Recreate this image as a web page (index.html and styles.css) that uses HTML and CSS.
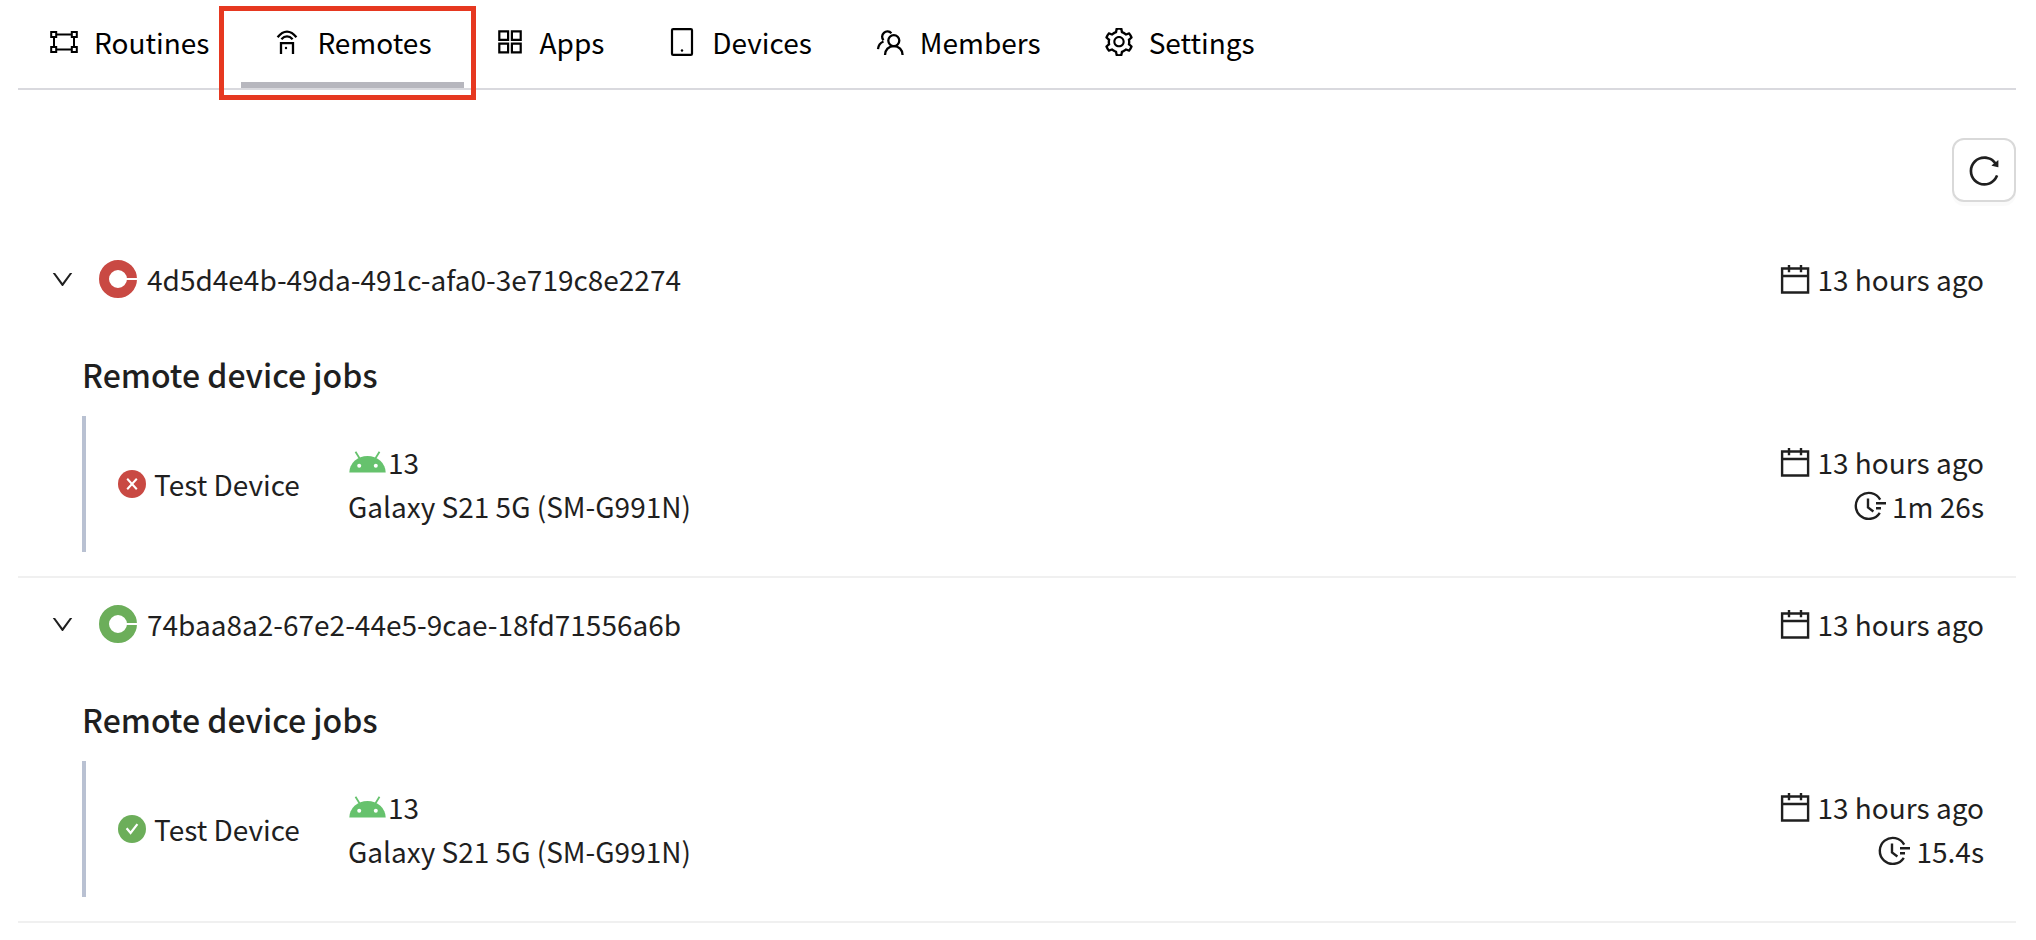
FILE: index.html
```html
<!DOCTYPE html>
<html lang="en">
<head>
<meta charset="utf-8">
<meta name="viewport" content="width=device-width, initial-scale=1">
<title>Remotes</title>
<link rel="stylesheet" href="styles.css">
</head>
<body>
<svg class="sprite" aria-hidden="true">
  <symbol id="i-routines" viewBox="0 0 28 28"><g fill="none" stroke="currentColor" stroke-width="2"><path d="M7 6.500h14M7 21.500h14M4 9.500v9M24 9.500v9"/><path d="M1.200 4h5v5h-5zM21.800 4h5v5h-5zM1.200 19h5v5h-5zM21.800 19h5v5h-5z" stroke-width="2"/></g></symbol>
  <symbol id="i-remotes" viewBox="0 0 28 28"><g fill="none" stroke="currentColor" stroke-width="2.300"><path d="M4.600 9.200Q9 3.600 14 3.600T23.400 9.200M8.400 11.200Q11 8.400 14 8.400T19.600 11.200M8 26V15.200h12V26"/></g><circle cx="13" cy="20" r="1.200" fill="currentColor"/></symbol>
  <symbol id="i-apps" viewBox="0 0 28 28"><path d="M3.300 3.300h8.800v8.600H3.300zM15.900 3.300h8.800v8.600h-8.800zM3.300 15.700h8.800v8.600H3.300zM15.900 15.700h8.800v8.600h-8.800z" fill="none" stroke="currentColor" stroke-width="2.200"/></symbol>
  <symbol id="i-devices" viewBox="0 0 28 28"><rect x="4" y="1.100" width="20" height="25.800" rx="1.200" fill="none" stroke="currentColor" stroke-width="2.200"/><circle cx="14" cy="22.500" r="1.200" fill="currentColor"/></symbol>
  <symbol id="i-members" viewBox="0 0 28 28"><g fill="none" stroke="currentColor" stroke-width="2.300"><circle cx="17.800" cy="12.600" r="5.500"/><path d="M9 27c0-5 3.700-8.900 8.800-8.900s8.800 3.900 8.800 8.900M15.400 5.200A5.300 5.300 0 1 0 7.500 12.300M7.500 13.500C4.500 14.700 2.300 17.500 2 21.200"/></g></symbol>
  <symbol id="i-settings" viewBox="78 78 868 868"><path fill="currentColor" d="M924.800 625.700l-65.500-56c3.100-19 4.700-38.400 4.700-57.800s-1.600-38.800-4.700-57.800l65.500-56a32.030 32.030 0 009.300-35.200l-.9-2.600a443.740 443.740 0 00-79.700-137.900l-1.800-2.100a32.120 32.120 0 00-35.100-9.500l-81.300 28.900c-30-24.600-63.500-44-99.700-57.600l-15.700-85a32.050 32.050 0 00-25.800-25.700l-2.700-.5c-52.100-9.400-106.900-9.400-159 0l-2.700.5a32.050 32.050 0 00-25.800 25.700l-15.800 85.400a351.860 351.860 0 00-99 57.400l-81.900-29.100a32 32 0 00-35.100 9.500l-1.800 2.100a446.020 446.020 0 00-79.700 137.900l-.9 2.600c-4.500 12.500-.8 26.500 9.300 35.200l66.300 56.600c-3.100 18.800-4.600 38-4.600 57.100 0 19.200 1.500 38.400 4.600 57.100L99 625.500a32.030 32.030 0 00-9.300 35.200l.9 2.600c18.100 50.400 44.900 96.900 79.700 137.900l1.800 2.100a32.120 32.120 0 0035.100 9.500l81.900-29.100c29.800 24.500 63.100 43.900 99 57.400l15.800 85.400a32.050 32.050 0 0025.800 25.700l2.700.5a449.400 449.400 0 00159 0l2.700-.5a32.050 32.050 0 0025.800-25.700l15.700-85a350 350 0 0099.700-57.600l81.300 28.900a32 32 0 0035.100-9.500l1.800-2.100c34.800-41.100 61.600-87.500 79.700-137.900l.9-2.600c4.500-12.300.8-26.300-9.300-35zM788.300 465.900c2.500 15.100 3.800 30.600 3.800 46.100s-1.300 31-3.800 46.100l-6.600 40.100 74.700 63.900a370.030 370.030 0 01-42.600 73.600L721 702.800l-31.400 25.800c-23.900 19.600-50.500 35-79.300 45.800l-38.100 14.300-17.900 97a377.500 377.500 0 01-85 0l-17.900-97.200-37.800-14.500c-28.500-10.800-55-26.200-78.700-45.700l-31.400-25.900-93.400 33.200c-17-22.900-31.200-47.600-42.600-73.600l75.500-64.500-6.500-40c-2.400-14.900-3.700-30.300-3.700-45.500 0-15.300 1.200-30.600 3.700-45.500l6.500-40-75.500-64.500c11.300-26.100 25.600-50.700 42.600-73.600l93.400 33.200 31.400-25.900c23.700-19.500 50.200-34.900 78.700-45.700l37.900-14.300 17.900-97.200c28.100-3.200 56.800-3.200 85 0l17.900 97 38.100 14.300c28.700 10.800 55.400 26.200 79.300 45.800l31.400 25.800 92.800-32.900c17 22.900 31.200 47.600 42.600 73.600L781.800 426l6.500 39.900zM512 326c-97.200 0-176 78.800-176 176s78.800 176 176 176 176-78.800 176-176-78.800-176-176-176zm79.200 255.200A111.600 111.600 0 01512 614c-29.900 0-58-11.700-79.200-32.800A111.600 111.600 0 01400 502c0-29.900 11.700-58 32.800-79.200C454 401.600 482.100 390 512 390c29.900 0 58 11.600 79.200 32.800A111.600 111.600 0 01624 502c0 29.900-11.700 58-32.800 79.200z"/></symbol>
  <symbol id="i-reload" viewBox="0 -28 1024 1024"><path fill="currentColor" d="M909.100 209.300l-56.400 44.100C775.800 155.100 656.200 92 521.900 92 290 92 102.300 279.500 102 511.500 101.700 743.700 289.800 932 521.900 932c181.300 0 335.800-115 394.600-276.100 1.500-4.200-.7-8.900-4.900-10.300l-56.700-19.500a8 8 0 00-10.100 4.800c-1.800 5-3.800 10-5.900 14.900-17.300 41-42.100 77.800-73.700 109.400A344.770 344.770 0 01655.900 829c-42.300 17.900-87.400 27-133.800 27-46.500 0-91.500-9.100-133.800-27A341.500 341.500 0 01279 755.200a342.160 342.160 0 01-73.700-109.400c-17.900-42.400-27-87.400-27-133.900s9.100-91.500 27-133.900c17.300-41 42.100-77.800 73.700-109.400 31.600-31.600 68.400-56.400 109.300-73.800 42.300-17.900 87.400-27 133.800-27 46.500 0 91.500 9.100 133.800 27a341.500 341.500 0 01109.300 73.800c9.900 9.900 19.200 20.400 27.800 31.400l-60.200 47a8 8 0 003 14.100l175.600 43c5 1.200 9.900-2.600 9.900-7.700l.8-180.900c-.1-6.600-7.800-10.300-13-6.200z"/></symbol>
  <symbol id="i-down" viewBox="20 20 984 984"><path fill="currentColor" d="M884 256h-75c-5.100 0-9.900 2.500-12.900 6.600L512 654.200 227.900 262.600c-3-4.100-7.800-6.600-12.900-6.600h-75c-6.500 0-10.300 7.400-6.500 12.700l352.600 486.100c12.800 17.600 39 17.600 51.700 0l352.600-486.100c3.900-5.300.1-12.700-6.400-12.700z"/></symbol>
  <symbol id="i-ring" viewBox="0 0 38 38"><circle cx="19" cy="19" r="14" fill="none" stroke="currentColor" stroke-width="10"/><path d="M27 19h11" stroke="#fff" stroke-width="2"/></symbol>
  <symbol id="i-calendar" viewBox="0 0 32 32"><path d="M3.100 5.500h26v24h-26zM3.100 13h26M10 2v7.200M22 2v7.200" fill="none" stroke="currentColor" stroke-width="2.400"/></symbol>
  <symbol id="i-time" viewBox="0 0 32 32"><g fill="none" stroke="currentColor" stroke-width="2.400"><path d="M26.200 9.600A13 13 0 1 0 25.800 22.800"/><path d="M14 8.500v9l5.400 4M22 13.200h10M22 18.200h5"/></g></symbol>
  <symbol id="i-android" viewBox="-1 0 38 22"><path d="M0.300 21.500a18.200 16.500 0 0 1 36.400 0z" fill="#66c26d"/><path d="M6.500 0.800l4 6.500M30.500 0.800l-4 6.500" stroke="#66c26d" stroke-width="1.800"/><circle cx="10.200" cy="14.700" r="2" fill="#fff"/><circle cx="26.800" cy="14.700" r="2" fill="#fff"/></symbol>
  <symbol id="i-fail" viewBox="0 0 28 28"><circle cx="14" cy="14" r="14" fill="currentColor"/><path d="M9.200 8.800l9.600 10.400M18.800 8.800L9.200 19.200" stroke="#fff" stroke-width="2"/></symbol>
  <symbol id="i-pass" viewBox="0 0 28 28"><circle cx="14" cy="14" r="14" fill="currentColor"/><path d="M8.600 13.200l4 4.800 6.800-8.800" fill="none" stroke="#fff" stroke-width="2.200"/></symbol>
</svg>

<nav class="tabs" aria-label="Project">
  <a class="tab" href="#routines"><svg class="tab-icon" aria-hidden="true"><use href="#i-routines"/></svg>Routines</a>
  <a class="tab tab-active" href="#remotes" aria-current="page"><svg class="tab-icon" aria-hidden="true"><use href="#i-remotes"/></svg>Remotes</a>
  <a class="tab" href="#apps"><svg class="tab-icon" aria-hidden="true"><use href="#i-apps"/></svg>Apps</a>
  <a class="tab" href="#devices"><svg class="tab-icon" aria-hidden="true"><use href="#i-devices"/></svg>Devices</a>
  <a class="tab" href="#members"><svg class="tab-icon" aria-hidden="true"><use href="#i-members"/></svg>Members</a>
  <a class="tab" href="#settings"><svg class="tab-icon" aria-hidden="true"><use href="#i-settings"/></svg>Settings</a>
</nav>

<main class="content">
  <div class="toolbar">
    <button class="refresh" type="button" aria-label="Refresh"><svg class="refresh-icon" aria-hidden="true"><use href="#i-reload"/></svg></button>
  </div>

  <section class="remote">
    <header class="remote-head">
      <button class="toggle" type="button" aria-expanded="true" aria-label="Collapse"><svg class="toggle-icon" aria-hidden="true"><use href="#i-down"/></svg></button>
      <svg class="ring fail" aria-hidden="true"><use href="#i-ring"/></svg>
      <span class="remote-id">4d5d4e4b-49da-491c-afa0-3e719c8e2274</span>
      <span class="meta"><svg class="meta-icon" aria-hidden="true"><use href="#i-calendar"/></svg>13 hours ago</span>
    </header>
    <h2 class="jobs-title">Remote device jobs</h2>
    <div class="job">
      <div class="job-name"><svg class="status fail" aria-hidden="true"><use href="#i-fail"/></svg>Test Device</div>
      <div class="job-device">
        <div class="platform"><svg class="android" aria-hidden="true"><use href="#i-android"/></svg>13</div>
        <div>Galaxy S21 5G (SM-G991N)</div>
      </div>
      <div class="job-times">
        <div class="meta"><svg class="meta-icon" aria-hidden="true"><use href="#i-calendar"/></svg>13 hours ago</div>
        <div class="meta"><svg class="meta-icon" aria-hidden="true"><use href="#i-time"/></svg>1m 26s</div>
      </div>
    </div>
  </section>

  <section class="remote">
    <header class="remote-head">
      <button class="toggle" type="button" aria-expanded="true" aria-label="Collapse"><svg class="toggle-icon" aria-hidden="true"><use href="#i-down"/></svg></button>
      <svg class="ring pass" aria-hidden="true"><use href="#i-ring"/></svg>
      <span class="remote-id">74baa8a2-67e2-44e5-9cae-18fd71556a6b</span>
      <span class="meta"><svg class="meta-icon" aria-hidden="true"><use href="#i-calendar"/></svg>13 hours ago</span>
    </header>
    <h2 class="jobs-title">Remote device jobs</h2>
    <div class="job">
      <div class="job-name"><svg class="status pass" aria-hidden="true"><use href="#i-pass"/></svg>Test Device</div>
      <div class="job-device">
        <div class="platform"><svg class="android" aria-hidden="true"><use href="#i-android"/></svg>13</div>
        <div>Galaxy S21 5G (SM-G991N)</div>
      </div>
      <div class="job-times">
        <div class="meta"><svg class="meta-icon" aria-hidden="true"><use href="#i-calendar"/></svg>13 hours ago</div>
        <div class="meta"><svg class="meta-icon" aria-hidden="true"><use href="#i-time"/></svg>15.4s</div>
      </div>
    </div>
  </section>
</main>
</body>
</html>
```
FILE: styles.css
```css
* {
  box-sizing: border-box;
}

body {
  margin: 0;
  padding: 0 20px 0 18px;
  background: #fff;
  color: #1f1f1f;
  font-family: "Noto Sans CJK KR", "Noto Sans CJK SC", "Noto Sans", sans-serif;
  font-size: 28px;
  line-height: 44px;
}

svg {
  display: block;
  flex: none;
}

.sprite {
  position: absolute;
  width: 0;
  height: 0;
}

.tabs {
  display: flex;
  border-bottom: 2px solid #d9d9de;
}

.tab {
  position: relative;
  display: flex;
  align-items: center;
  gap: 16px;
  padding: 20px 32px 18px;
  border-bottom: 6px solid transparent;
  color: #000;
  text-decoration: none;
}

.tab-active {
  border-bottom-color: #b7b7be;
}

/* Highlight frame around the current tab */
.tab-active::after {
  content: "";
  position: absolute;
  z-index: 1;
  top: 6px;
  right: -12px;
  bottom: -18px;
  left: -22px;
  border: 5px solid #e63820;
}

.tab-icon {
  width: 28px;
  height: 28px;
}

.toolbar {
  display: flex;
  justify-content: flex-end;
  padding: 48px 0 31px;
}

.refresh {
  display: grid;
  place-items: center;
  width: 64px;
  height: 64px;
  padding: 0;
  border: 2px solid #d9d9d9;
  border-radius: 12px;
  background: #fff;
  box-shadow: 0 4px 0 rgba(0, 0, 0, 0.02);
  color: inherit;
}

.refresh-icon {
  width: 36px;
  height: 36px;
}

.remote {
  padding: 24px 0;
  border-bottom: 2px solid #f0f0f0;
}

.remote-head {
  display: flex;
  align-items: center;
  padding: 0 32px;
}

.toggle {
  padding: 0;
  border: 0;
  background: none;
  color: inherit;
}

.toggle-icon {
  width: 25px;
  height: 25px;
}

.ring {
  width: 38px;
  height: 38px;
  margin: 0 10px 0 24px;
}

.fail {
  color: #c94943;
}

.pass {
  color: #6cae5a;
}

.meta {
  display: flex;
  align-items: center;
  justify-content: flex-end;
  gap: 6px;
}

.remote-head .meta {
  margin-left: auto;
}

.meta-icon {
  width: 32px;
  height: 32px;
}

.jobs-title {
  margin: 48px 0 16px 64px;
  font-size: 32px;
  font-weight: 500;
  line-height: 51px;
}

.job {
  display: flex;
  align-items: center;
  margin-left: 64px;
  padding: 24px 32px;
  border-left: 4px solid #b9c1d2;
}

.job-name {
  display: flex;
  align-items: center;
  gap: 8px;
  width: 230px;
}

.status {
  width: 28px;
  height: 28px;
}

.platform {
  display: flex;
  align-items: center;
  gap: 2px;
}

.android {
  width: 38px;
  height: 22px;
}

.job-times {
  margin-left: auto;
}
```
